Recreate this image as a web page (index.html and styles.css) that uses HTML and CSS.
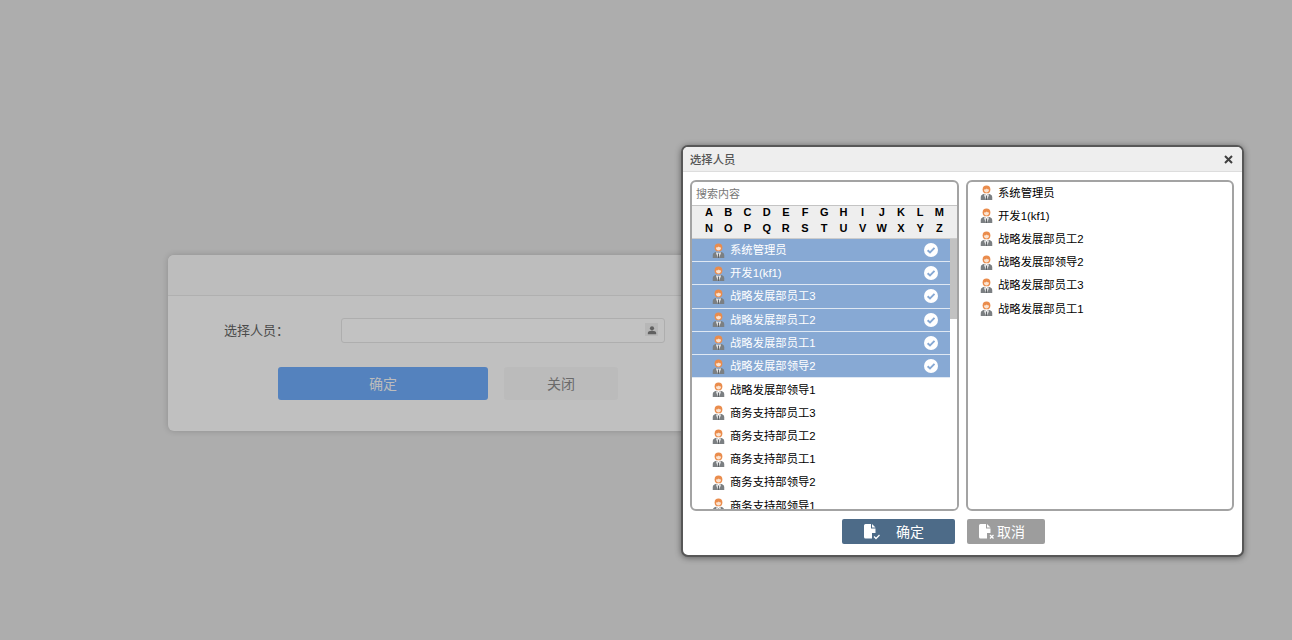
FILE: index.html
```html
<!DOCTYPE html>
<html lang="zh-CN">
<head>
<meta charset="utf-8">
<title>选择人员</title>
<link rel="stylesheet" href="styles.css">
</head>
<body>
<svg class="defs" width="0" height="0" aria-hidden="true">
  <symbol id="avatar" viewBox="0 0 14 16">
    <path d="M.8 16v-3C.8 11 2.400 10 4.600 9.400L7 11l2.400-1.600C11.600 10 13.200 11 13.200 13v3z" fill="#7b7f82"/>
    <path d="M4.900 9.600 7 11.200l2.100-1.600.5 1.300L7.600 16H6.400L4.400 10.900z" fill="#e4e5e6"/>
    <path d="M6.500 11.500h1l.3 4.500H6.200z" fill="#5f6366"/>
    <circle cx="7" cy="4.700" r="4.200" fill="#ea8c4c"/>
    <path d="M4.200 4.800c1.300.1 2.400-.3 3.200-1.200.5.7 1.300 1.200 2.400 1.200C9.700 6.900 8.500 8 7 8S4.300 6.900 4.200 4.800z" fill="#fbe3d0"/>
  </symbol>
  <symbol id="check" viewBox="0 0 14 14">
    <circle cx="7" cy="7" r="7" fill="#fff"/>
    <path d="M3.600 7.200 6 9.500l4.500-4.600" fill="none" stroke="#87a9d4" stroke-width="1.900"/>
  </symbol>
  <symbol id="doc" viewBox="0 0 14 16">
    <path d="M0 1.500Q0 0 1.500 0H7v4.500h4.500V9H8v5.500H1.500Q0 14.500 0 13z" fill="#fff"/>
    <path d="M8 0l3.500 3.500H8z" fill="#fff"/>
  </symbol>
</svg>

<main class="card">
  <header class="card-head"></header>
  <div class="card-body">
    <div class="field">
      <label class="field-label">选择人员：</label>
      <div class="field-input">
        <span class="field-icon">
          <svg width="10" height="10" viewBox="0 0 12 12"><circle cx="6" cy="4" r="2.500" fill="#606060"/><path d="M1 11V9.500C1 8 3 7 6 7s5 1 5 2.500V11z" fill="#606060"/></svg>
        </span>
      </div>
    </div>
    <div class="card-actions">
      <button class="btn-primary" type="button">确定</button>
      <button class="btn-close" type="button">关闭</button>
    </div>
  </div>
</main>

<section class="dialog">
  <header class="dialog-head">
    <span class="dialog-title">选择人员</span>
    <svg class="dialog-x" width="9" height="9" viewBox="0 0 9 9"><path d="M1 1l7 7M8 1L1 8" stroke="#3f3f3f" stroke-width="2"/></svg>
  </header>
  <div class="panes">
    <div class="pane">
      <div class="search">搜索内容</div>
      <div class="alpha">
        <span>A</span><span>B</span><span>C</span><span>D</span><span>E</span><span>F</span><span>G</span><span>H</span><span>I</span><span>J</span><span>K</span><span>L</span><span>M</span>
        <span>N</span><span>O</span><span>P</span><span>Q</span><span>R</span><span>S</span><span>T</span><span>U</span><span>V</span><span>W</span><span>X</span><span>Y</span><span>Z</span>
      </div>
      <div class="list-wrap">
        <ul class="list">
          <li class="row sel"><svg class="ava"><use href="#avatar"/></svg><span class="name">系统管理员</span><svg class="tick"><use href="#check"/></svg></li>
          <li class="row sel"><svg class="ava"><use href="#avatar"/></svg><span class="name">开发1(kf1)</span><svg class="tick"><use href="#check"/></svg></li>
          <li class="row sel"><svg class="ava"><use href="#avatar"/></svg><span class="name">战略发展部员工3</span><svg class="tick"><use href="#check"/></svg></li>
          <li class="row sel"><svg class="ava"><use href="#avatar"/></svg><span class="name">战略发展部员工2</span><svg class="tick"><use href="#check"/></svg></li>
          <li class="row sel"><svg class="ava"><use href="#avatar"/></svg><span class="name">战略发展部员工1</span><svg class="tick"><use href="#check"/></svg></li>
          <li class="row sel"><svg class="ava"><use href="#avatar"/></svg><span class="name">战略发展部领导2</span><svg class="tick"><use href="#check"/></svg></li>
          <li class="row"><svg class="ava"><use href="#avatar"/></svg><span class="name">战略发展部领导1</span></li>
          <li class="row"><svg class="ava"><use href="#avatar"/></svg><span class="name">商务支持部员工3</span></li>
          <li class="row"><svg class="ava"><use href="#avatar"/></svg><span class="name">商务支持部员工2</span></li>
          <li class="row"><svg class="ava"><use href="#avatar"/></svg><span class="name">商务支持部员工1</span></li>
          <li class="row"><svg class="ava"><use href="#avatar"/></svg><span class="name">商务支持部领导2</span></li>
          <li class="row"><svg class="ava"><use href="#avatar"/></svg><span class="name">商务支持部领导1</span></li>
        </ul>
        <div class="scroll"><div class="thumb"></div></div>
      </div>
    </div>
    <div class="pane pane-right">
      <ul class="list">
        <li class="row"><svg class="ava"><use href="#avatar"/></svg><span class="name">系统管理员</span></li>
        <li class="row"><svg class="ava"><use href="#avatar"/></svg><span class="name">开发1(kf1)</span></li>
        <li class="row"><svg class="ava"><use href="#avatar"/></svg><span class="name">战略发展部员工2</span></li>
        <li class="row"><svg class="ava"><use href="#avatar"/></svg><span class="name">战略发展部领导2</span></li>
        <li class="row"><svg class="ava"><use href="#avatar"/></svg><span class="name">战略发展部员工3</span></li>
        <li class="row"><svg class="ava"><use href="#avatar"/></svg><span class="name">战略发展部员工1</span></li>
      </ul>
    </div>
  </div>
  <footer class="dialog-foot">
    <button class="dbtn dbtn-ok" type="button">
      <svg class="doc" width="17" height="17" viewBox="0 0 17 17"><use href="#doc" width="14" height="16"/><path d="M10 12.500l2 2 3.500-3.500" fill="none" stroke="#fff" stroke-width="1.300"/></svg>
      <span class="dbtn-text">确定</span>
    </button>
    <button class="dbtn dbtn-cancel" type="button">
      <svg class="doc" width="17" height="17" viewBox="0 0 17 17"><use href="#doc" width="14" height="16"/><path d="M11 11l3.500 3.500M14.500 11 11 14.500" fill="none" stroke="#fff" stroke-width="1.300"/></svg>
      <span class="dbtn-label">取消</span>
    </button>
  </footer>
</section>
</body>
</html>
```
FILE: styles.css
```css
* { box-sizing: border-box; }
html, body { margin: 0; height: 100%; }
body {
  width: 1292px;
  height: 640px;
  overflow: hidden;
  position: relative;
  background: #adadad;
  font-family: "Liberation Sans", "Noto Sans CJK SC", sans-serif;
  font-size: 12px;
}
.defs { position: absolute; }
ul { list-style: none; margin: 0; padding: 0; }
button { font-family: inherit; border: 0; padding: 0; }

/* background card, dimmed */
.card {
  position: absolute;
  left: 168px;
  top: 255px;
  width: 530px;
  height: 176px;
  background: #c0c0c0;
  border-radius: 6px;
  box-shadow: 0 0 6px rgba(0, 0, 0, .18);
}
.card-head {
  height: 41px;
  background: #bdbdbd;
  border-bottom: 1px solid #b0b0b0;
  border-radius: 6px 6px 0 0;
}
.card-body { padding: 22px 0 0 56px; }
.field { display: flex; align-items: center; height: 25px; }
.field-label { width: 117px; font-size: 13px; line-height: 25px; height: 25px; color: #4b4b4b; }
.field-input {
  width: 324px;
  height: 25px;
  border: 1px solid #aeaeae;
  border-radius: 3px;
  background: #c2c2c2;
  display: flex;
  justify-content: flex-end;
  align-items: center;
  padding: 0 6px 2px 0;
}
.field-icon {
  width: 13px;
  height: 13px;
  background: #b7b7b7;
  display: flex;
  align-items: center;
  justify-content: center;
}
.card-actions { display: flex; gap: 16px; margin: 24px 0 0 54px; }
.btn-primary {
  width: 210px;
  height: 33px;
  padding-bottom: 2px;
  background: #5482be;
  border-radius: 3px;
  color: #bcbcbc;
  font-size: 14px;
}
.btn-close {
  width: 114px;
  height: 33px;
  padding-bottom: 2px;
  background: #bbb;
  border-radius: 3px;
  color: #6a6a6a;
  font-size: 14px;
}

/* dialog */
.dialog {
  position: absolute;
  left: 681px;
  top: 145px;
  width: 563px;
  height: 412px;
  background: #fff;
  border: 2px solid #575757;
  border-radius: 7px;
  box-shadow: 0 1px 6px rgba(0, 0, 0, .45);
  overflow: hidden;
}
.dialog-head {
  height: 25px;
  background: #eee;
  border-bottom: 1px solid #ddd;
  display: flex;
  align-items: center;
  justify-content: space-between;
  padding: 0 9px 0 7px;
}
.dialog-title { font-size: 11.330px; font-weight: 500; color: #555; }
.panes { display: flex; gap: 7px; padding: 8px 0 0 7px; }
.pane {
  width: 269px;
  height: 331px;
  border: 2px solid #a3a3a3;
  border-radius: 6px;
  background: #fff;
  overflow: hidden;
  display: flex;
  flex-direction: column;
}
.pane-right { width: 268px; }
.search {
  height: 24px;
  flex: none;
  padding: 3px 0 0 4px;
  line-height: 18px;
  font-size: 11px;
  color: #777;
  border-bottom: 1px solid #c4c4c4;
}
.alpha {
  flex: none;
  height: 33px;
  background: #eee;
  border-bottom: 1px solid #ccc;
  padding-left: 7.500px;
  display: grid;
  grid-template-columns: repeat(13, 19.200px);
  grid-auto-rows: 16px;
  font-size: 11px;
  font-weight: 700;
  color: #000;
  text-align: center;
  line-height: 12px;
}
.list-wrap { flex: 1; min-height: 0; display: flex; }
.list-wrap .list { width: 258px; flex: none; }
.scroll { width: 7px; flex: none; background: #fff; }
.thumb { height: 80px; background: #c2c2c2; }
.row {
  height: 23.200px;
  display: flex;
  align-items: center;
  padding: 0 0 2px 20px;
  color: #000;
  font-size: 11.330px;
  position: relative;
}
.sel {
  background: #87a9d4;
  color: #fff;
  border-bottom: 1px solid #dfe8f3;
}
.ava { width: 13px; height: 15px; flex: none; position: relative; top: 1px; }
.name { margin-left: 5px; }
.tick { position: absolute; right: 12px; top: 4px; width: 14px; height: 14px; }
.pane-right .row { padding-left: 12px; }
.pane-right .list { margin-top: -1px; }

.dialog-foot { display: flex; gap: 12px; padding: 8px 0 0 159px; }
.dbtn {
  height: 25px;
  border-radius: 2px;
  color: #fff;
  font-size: 14px;
  display: flex;
  align-items: center;
  padding-bottom: 1px;
}
.dbtn-ok { width: 113px; background: #4d6b88; padding-left: 22px; }
.dbtn-text { margin-left: 15px; }
.dbtn-cancel { width: 78px; background: #9d9d9d; padding-left: 12px; }
.dbtn-label { margin-left: 1px; }
.doc { flex: none; position: relative; top: 1px; }
```
